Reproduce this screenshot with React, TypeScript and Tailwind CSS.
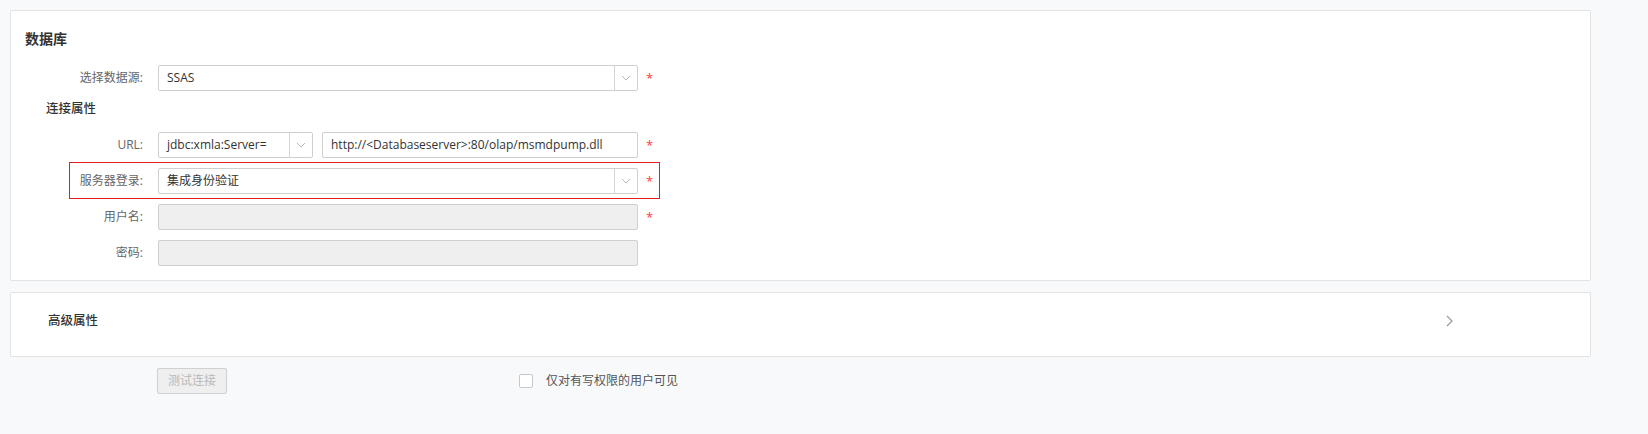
import { ReactNode } from 'react';

const font = { fontFamily: '"Open Sans", "Noto Sans CJK SC", sans-serif' };

function Star() {
  return <span className="ml-[8px] w-[10px] text-[13px] leading-none text-[#ff3b3b]">*</span>;
}

function Arrow() {
  return (
    <span className="flex h-full w-[23px] items-center justify-center border-l border-[#d4d4d4]">
      <svg width="10" height="6" viewBox="0 0 10 6" fill="none">
        <path d="M1 1l4 4 4-4" stroke="#b8b8b8" strokeWidth="1" />
      </svg>
    </span>
  );
}

function Row({ label, children, star }: { label: string; children: ReactNode; star?: boolean }) {
  return (
    <div className="flex h-[26px] items-center">
      <div className="w-[133px] pr-[1px] text-right text-[12px] text-[#666]">{label}</div>
      <div className="ml-[14px] flex w-[480px] gap-[9px]">{children}</div>
      {star && <Star />}
    </div>
  );
}

function Select({ value, className = '' }: { value: string; className?: string }) {
  return (
    <div
      className={`flex h-[26px] items-center rounded-[2px] border border-[#cfcfcf] bg-white text-[12px] text-[#333] ${className}`}
    >
      <span className="flex-1 truncate pl-[8px]">{value}</span>
      <Arrow />
    </div>
  );
}

function Input({ value = '', disabled, className = '' }: { value?: string; disabled?: boolean; className?: string }) {
  return (
    <div
      className={`flex h-[26px] items-center rounded-[2px] border border-[#cfcfcf] pl-[8px] text-[12px] text-[#333] ${
        disabled ? 'bg-[#efefef]' : 'bg-white'
      } ${className}`}
    >
      {value}
    </div>
  );
}

export default function App() {
  return (
    <div className="h-[434px] w-[1648px] bg-[#f8f9fb] pl-[10px] pt-[10px]" style={font}>
      <section className="w-[1581px] rounded-[2px] border border-[#e3e3e3] bg-white pb-[14px]">
        <h2 className="pl-[14px] pt-[18px] text-[14px] font-bold leading-[20px] text-[#333]">数据库</h2>

        <div className="mt-[16px]">
          <Row label="选择数据源:" star>
            <Select value="SSAS" className="w-full" />
          </Row>
        </div>

        <div className="mt-[8px] pl-[35px] text-[12.5px] font-medium leading-[20px] text-[#333]">连接属性</div>

        <div className="mt-[13px] flex flex-col gap-[10px]">
          <Row label="URL:" star>
            <Select value="jdbc:xmla:Server=" className="w-[155px] shrink-0" />
            <Input value="http://<Databaseserver>:80/olap/msmdpump.dll" className="flex-1" />
          </Row>

          <div className="relative">
            <Row label="服务器登录:" star>
              <Select value="集成身份验证" className="w-full" />
            </Row>
            <div className="pointer-events-none absolute bottom-[-5px] left-[58px] top-[-6px] w-[591px] border border-[#e02020]" />
          </div>

          <Row label="用户名:" star>
            <Input disabled className="w-full" />
          </Row>

          <Row label="密码:">
            <Input disabled className="w-full" />
          </Row>
        </div>
      </section>

      <section className="mt-[11px] flex h-[65px] w-[1581px] items-center justify-between rounded-[2px] border border-[#e3e3e3] bg-white pl-[37px] pr-[137px]">
        <span className="pb-[6px] text-[12.5px] font-medium text-[#333]">高级属性</span>
        <svg width="7" height="12" viewBox="0 0 7 12" fill="none" className="mb-[8px]">
          <path d="M1 1l5 5-5 5" stroke="#999" strokeWidth="1.2" />
        </svg>
      </section>

      <div className="mt-[11px] flex items-center">
        <button
          type="button"
          disabled
          className="ml-[147px] h-[26px] w-[70px] rounded-[2px] border border-[#d0d0d0] bg-[#efefef] text-[12px] text-[#b9b9b9]"
        >
          测试连接
        </button>
        <label className="ml-[292px] flex items-center gap-[13px] text-[12px] text-[#555]">
          <span className="h-[14px] w-[14px] rounded-[2px] border border-[#c8c8c8] bg-white" />
          仅对有写权限的用户可见
        </label>
      </div>
    </div>
  );
}
